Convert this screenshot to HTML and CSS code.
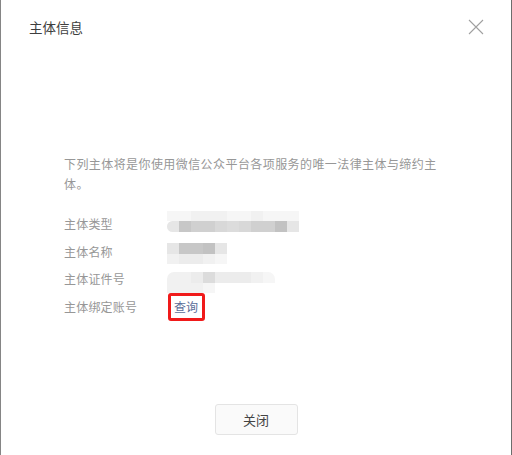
FILE: index.html
```html
<!DOCTYPE html>
<html lang="zh-CN">
<head>
<meta charset="utf-8">
<title>主体信息</title>
<link rel="stylesheet" href="styles.css">
</head>
<body>
<div class="dialog">
  <div class="dialog-header">
    <h3 class="dialog-title">主体信息</h3>
    <button class="dialog-close" aria-label="关闭">
      <svg width="16" height="16" viewBox="0 0 16 16"><path d="M1 1L15 15M15 1L1 15" stroke="#a0a0a0" stroke-width="1.1" fill="none"/></svg>
    </button>
  </div>
  <div class="dialog-body">
    <p class="desc">下列主体将是你使用微信公众平台各项服务的唯一法律主体与缔约主体。</p>
    <ul class="info-list">
      <li class="info-row">
        <span class="info-label">主体类型</span>
        <span class="mosaic mosaic-type">
          <span class="mrow mrow-top"><i class="g9"></i><i class="g9"></i><i class="g8"></i><i class="g8"></i><i class="g8"></i><i class="g9"></i><i class="g9"></i><i class="g8"></i><i class="g9"></i><i class="g9"></i><i class="g9"></i></span>
          <span class="mrow"><i class="g6 first"></i><i class="g2"></i><i class="g3"></i><i class="g3"></i><i class="g4"></i><i class="g5"></i><i class="g4"></i><i class="g3"></i><i class="g3"></i><i class="g1"></i><i class="g6"></i></span>
        </span>
      </li>
      <li class="info-row">
        <span class="info-label">主体名称</span>
        <span class="mosaic mosaic-name">
          <span class="mrow"><i class="g6"></i><i class="g2"></i><i class="g2"></i><i class="g1"></i><i class="g6"></i></span>
          <span class="mrow mrow-low"><i class="g8"></i><i class="g7"></i><i class="g7"></i><i class="g8"></i><i class="g9"></i></span>
        </span>
      </li>
      <li class="info-row">
        <span class="info-label">主体证件号</span>
        <span class="mosaic mosaic-id">
          <span class="mrow mrow-fade"><i class="g8 first"></i><i class="g8"></i><i class="g7"></i><i class="g5"></i><i class="g7"></i><i class="g7"></i><i class="g7"></i><i class="g8"></i><i class="g9 last"></i></span>
          <span class="mrow mrow-low"><i class="g8"></i><i class="g8"></i><i class="g8"></i><i class="g9"></i></span>
        </span>
      </li>
      <li class="info-row">
        <span class="info-label">主体绑定账号</span>
        <span class="highlight"><a class="link" href="#">查询</a></span>
      </li>
    </ul>
  </div>
  <div class="dialog-footer">
    <button class="btn">关闭</button>
  </div>
</div>
</body>
</html>
```

FILE: styles.css
```css
* { box-sizing: border-box; }
html, body { margin: 0; padding: 0; background: #fff; }
body {
  font-family: "Noto Sans CJK SC", "Microsoft YaHei", sans-serif;
  color: #353535;
}
.dialog {
  height: 455px;
  border-left: 1px solid #858585;
  border-right: 1px solid #6c6c6c;
  width: 512px;
  display: flex;
  flex-direction: column;
}
.dialog-header {
  height: 54px;
  display: flex;
  align-items: center;
  justify-content: space-between;
  padding: 0 27px 0 28px;
}
.dialog-title {
  margin: 0;
  font-size: 13.5px;
  font-weight: normal;
  color: #3e3e3e;
  line-height: 20px;
}
.dialog-close {
  border: 0;
  background: none;
  padding: 0;
  width: 16px;
  height: 16px;
  display: flex;
  margin-top: -1px;
}
.dialog-body {
  padding: 100px 0 0 63px;
}
.desc {
  margin: 0;
  width: 380px;
  font-size: 12px;
  letter-spacing: 0.42px;
  line-height: 20px;
  color: #979797;
}
.info-list {
  list-style: none;
  margin: 16px 0 0;
  padding: 0;
}
.info-row {
  display: flex;
  align-items: center;
  height: 27.7px;
}
.info-label {
  width: 103px;
  font-size: 12px;
  letter-spacing: 0.2px;
  color: #979797;
  line-height: 20px;
}
.mosaic {
  display: flex;
  flex-direction: column;
}
.mrow { display: flex; }
.mrow i {
  display: block;
  width: 12px;
  height: 11px;
}
.mosaic-type { margin-top: -4px; }
.mosaic-type .mrow-top i { height: 10px; }
.mosaic-type .mrow i.first { border-radius: 6px 0 0 6px; }
.mosaic-name { margin-top: 4px; }
.mosaic-id { margin-top: 6px; }
.mosaic-id .mrow i.first { border-radius: 7px 0 0 0; }
.mosaic-id .mrow i.last { border-radius: 0 7px 0 0; }
.mrow-low i { height: 10px; }
.g1 { background: #c2c2c2; }
.g2 { background: #c7c7c7; }
.g3 { background: #d0d0d0; }
.g4 { background: #d8d8d8; }
.g5 { background: #dcdcdc; }
.g6 { background: #e6e6e6; }
.g7 { background: #ececec; }
.g8 { background: #f1f1f1; }
.g9 { background: #f6f6f6; }
.highlight {
  display: inline-flex;
  align-items: center;
  border: 3px solid #f01a1a;
  border-radius: 3px;
  padding: 0 4px 0 3px;
  height: 28px;
  margin-left: 1px;
  margin-top: 1px;
}
.link {
  font-size: 12px;
  color: #5a6d98;
  text-decoration: none;
  line-height: 20px;
}
.dialog-footer {
  margin-top: auto;
  display: flex;
  justify-content: center;
  padding-bottom: 20px;
}
.btn {
  width: 83px;
  height: 31px;
  border: 1px solid #e4e4e4;
  border-radius: 3px;
  background: #fafafa;
  font-family: inherit;
  font-size: 13px;
  color: #444;
  padding: 0;
}
```
